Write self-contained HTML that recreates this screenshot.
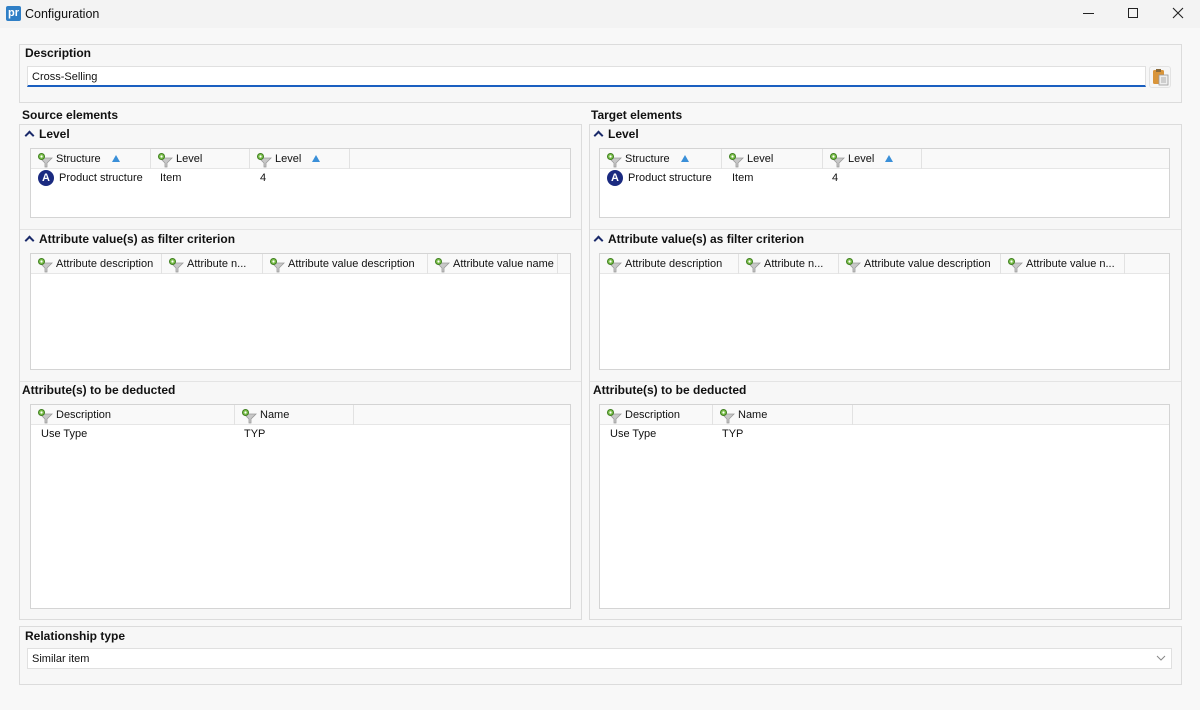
<!DOCTYPE html>
<html><head><meta charset="utf-8"><style>
*{box-sizing:border-box;margin:0;padding:0}
body{width:1200px;height:710px;background:#f8f8f8;font-family:"Liberation Sans",Tahoma,sans-serif;font-size:11px;color:#111;position:relative;overflow:hidden}
.a{position:absolute}
.b{font-weight:bold;font-size:12px}
.panel{position:absolute;border:1px solid #dcdcdc;background:#f7f7f7}
.tbl{position:absolute;background:#fff;border:1px solid #d4d4d4}
.hdr{position:absolute;left:0;top:0;height:20px;border-bottom:1px solid #e6e6e6;background:#f9f9f9;width:100%}
.col{position:absolute;top:0;height:20px;border-right:1px solid #e2e2e2;line-height:21px;padding-left:25px;white-space:nowrap}
.col svg{position:absolute;left:6px;top:3px}
.cell{position:absolute;line-height:18px;white-space:nowrap}
.div{position:absolute;height:1px;background:#e4e4e4}
.car{display:inline-block;width:7px;height:7px;border-left:2px solid #1a2a6a;border-top:2px solid #1a2a6a;transform:rotate(45deg);margin:0 6px 0 2px;position:relative;top:1px}
.A{position:absolute;width:16px;height:16px;border-radius:50%;background:#1a2a80;color:#fff;font-weight:bold;font-size:11px;text-align:center;line-height:16px}
</style></head><body>
<svg width="0" height="0" style="position:absolute"><defs>
<g id="f"><path d="M3 6 L15 6 L10 11 L10 15 L8 15 L8 11 Z" fill="#c8c8c8" stroke="#9a9a9a" stroke-width=".8"/><circle cx="4.5" cy="4.5" r="3" fill="#7cc04a" stroke="#3f7f20" stroke-width="1"/><circle cx="4.5" cy="4.5" r="1.1" fill="#fff"/></g>
<g id="s"><path d="M5 2 L9 9 L1 9 Z" fill="#3a8fd8"/></g>
</defs></svg>
<div class="a" style="left:0;top:0;width:1200px;height:28px;background:#f3f3f3"></div>
<div class="a" style="left:6px;top:6px;width:15px;height:15px;background:#2f7fc6;border-radius:2px;color:#fff;font-size:11px;line-height:14px;text-align:center;font-weight:bold">pr</div>
<div class="a" style="left:25px;top:7px;font-size:12.5px">Configuration</div>
<div class="a" style="left:1083px;top:13px;width:11px;height:1px;background:#222"></div>
<div class="a" style="left:1128px;top:8px;width:10px;height:10px;border:1px solid #222"></div>
<svg class="a" style="left:1172px;top:7px" width="12" height="12"><path d="M1 1L11 11M11 1L1 11" stroke="#222" stroke-width="1.1"/></svg>

<div class="panel" style="left:19px;top:44px;width:1163px;height:59px"></div>
<div class="a b" style="left:25px;top:46px">Description</div>
<div class="a" style="left:27px;top:66px;width:1119px;height:21px;background:#fff;border:1px solid #e0e0e0;border-bottom:2px solid #1a5fc0;padding-left:4px;line-height:20px">Cross-Selling</div>
<div class="a" style="left:1149px;top:66px;width:22px;height:22px;border:1px solid #e3e3e3;border-radius:3px;background:#f6f6f6"></div>
<svg class="a" style="left:1152px;top:68px" width="18" height="18"><rect x="1" y="2" width="11" height="14" rx="1.5" fill="#d9953a"/><rect x="4" y="1" width="5" height="3" fill="#8a6a3a"/><rect x="7" y="7" width="9" height="10" fill="#eee" stroke="#999" stroke-width=".8"/><path d="M9 10h5M9 12h5M9 14h5" stroke="#999" stroke-width=".8"/></svg>

<div class="a b" style="left:22px;top:108px">Source elements</div>
<div class="panel" style="left:19px;top:124px;width:563px;height:496px"></div>
<div class="a b" style="left:24px;top:127px"><span class="car"></span>Level</div>
<div class="tbl" style="left:30px;top:148px;width:541px;height:70px"><div class="hdr">
<div class="col" style="left:0;width:120px"><svg width="16" height="16"><use href="#f"/></svg>Structure <svg style="position:relative;left:7px;top:1px" width="10" height="10"><use href="#s"/></svg></div>
<div class="col" style="left:120px;width:99px"><svg width="16" height="16"><use href="#f"/></svg>Level</div>
<div class="col" style="left:219px;width:100px"><svg width="16" height="16"><use href="#f"/></svg>Level <svg style="position:relative;left:7px;top:1px" width="10" height="10"><use href="#s"/></svg></div></div>
<div class="A" style="left:7px;top:21px">A</div><div class="cell" style="left:28px;top:20px">Product structure</div><div class="cell" style="left:129px;top:20px">Item</div><div class="cell" style="left:229px;top:20px">4</div></div>
<div class="div" style="left:20px;top:229px;width:561px"></div>
<div class="a b" style="left:24px;top:232px"><span class="car"></span>Attribute value(s) as filter criterion</div>
<div class="tbl" style="left:30px;top:253px;width:541px;height:117px"><div class="hdr">
<div class="col" style="left:0;width:131px"><svg width="16" height="16"><use href="#f"/></svg>Attribute description</div>
<div class="col" style="left:131px;width:101px"><svg width="16" height="16"><use href="#f"/></svg>Attribute n...</div>
<div class="col" style="left:232px;width:165px"><svg width="16" height="16"><use href="#f"/></svg>Attribute value description</div>
<div class="col" style="left:397px;width:130px"><svg width="16" height="16"><use href="#f"/></svg>Attribute value name</div></div></div>
<div class="div" style="left:20px;top:381px;width:561px"></div>
<div class="a b" style="left:22px;top:383px">Attribute(s) to be deducted</div>
<div class="tbl" style="left:30px;top:404px;width:541px;height:205px"><div class="hdr">
<div class="col" style="left:0;width:204px"><svg width="16" height="16"><use href="#f"/></svg>Description</div>
<div class="col" style="left:204px;width:119px"><svg width="16" height="16"><use href="#f"/></svg>Name</div></div>
<div class="cell" style="left:10px;top:20px">Use Type</div><div class="cell" style="left:213px;top:20px">TYP</div></div>

<div class="a b" style="left:591px;top:108px">Target elements</div>
<div class="panel" style="left:589px;top:124px;width:593px;height:496px"></div>
<div class="a b" style="left:593px;top:127px"><span class="car"></span>Level</div>
<div class="tbl" style="left:599px;top:148px;width:571px;height:70px"><div class="hdr">
<div class="col" style="left:0;width:122px"><svg width="16" height="16"><use href="#f"/></svg>Structure <svg style="position:relative;left:7px;top:1px" width="10" height="10"><use href="#s"/></svg></div>
<div class="col" style="left:122px;width:101px"><svg width="16" height="16"><use href="#f"/></svg>Level</div>
<div class="col" style="left:223px;width:99px"><svg width="16" height="16"><use href="#f"/></svg>Level <svg style="position:relative;left:7px;top:1px" width="10" height="10"><use href="#s"/></svg></div></div>
<div class="A" style="left:7px;top:21px">A</div><div class="cell" style="left:28px;top:20px">Product structure</div><div class="cell" style="left:132px;top:20px">Item</div><div class="cell" style="left:232px;top:20px">4</div></div>
<div class="div" style="left:590px;top:229px;width:591px"></div>
<div class="a b" style="left:593px;top:232px"><span class="car"></span>Attribute value(s) as filter criterion</div>
<div class="tbl" style="left:599px;top:253px;width:571px;height:117px"><div class="hdr">
<div class="col" style="left:0;width:139px"><svg width="16" height="16"><use href="#f"/></svg>Attribute description</div>
<div class="col" style="left:139px;width:100px"><svg width="16" height="16"><use href="#f"/></svg>Attribute n...</div>
<div class="col" style="left:239px;width:162px"><svg width="16" height="16"><use href="#f"/></svg>Attribute value description</div>
<div class="col" style="left:401px;width:124px"><svg width="16" height="16"><use href="#f"/></svg>Attribute value n...</div></div></div>
<div class="div" style="left:590px;top:381px;width:591px"></div>
<div class="a b" style="left:593px;top:383px">Attribute(s) to be deducted</div>
<div class="tbl" style="left:599px;top:404px;width:571px;height:205px"><div class="hdr">
<div class="col" style="left:0;width:113px"><svg width="16" height="16"><use href="#f"/></svg>Description</div>
<div class="col" style="left:113px;width:140px"><svg width="16" height="16"><use href="#f"/></svg>Name</div></div>
<div class="cell" style="left:10px;top:20px">Use Type</div><div class="cell" style="left:122px;top:20px">TYP</div></div>

<div class="panel" style="left:19px;top:626px;width:1163px;height:59px"></div>
<div class="a b" style="left:25px;top:629px">Relationship type</div>
<div class="a" style="left:27px;top:648px;width:1145px;height:21px;background:#fff;border:1px solid #e0e0e0;padding-left:4px;line-height:20px">Similar item</div>
<svg class="a" style="left:1156px;top:654px" width="10" height="8"><path d="M1 2L5 6L9 2" stroke="#888" fill="none" stroke-width="1"/></svg>
</body></html>
